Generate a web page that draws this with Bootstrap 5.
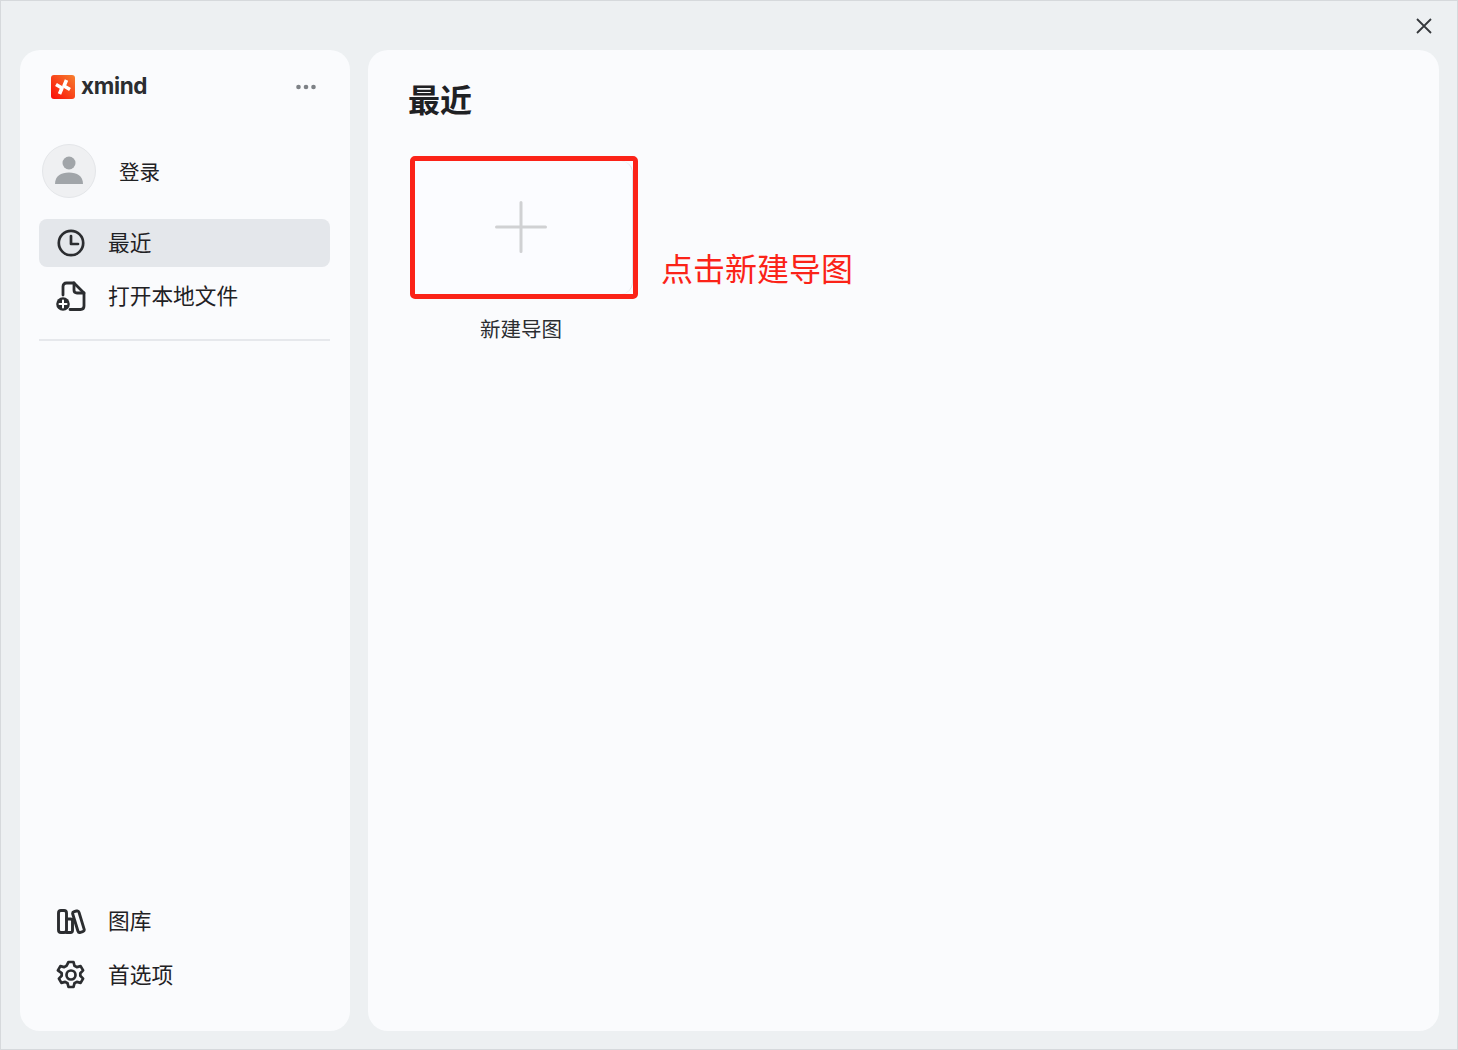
<!DOCTYPE html>
<html lang="zh">
<head>
<meta charset="utf-8">
<title>Xmind</title>
<link rel="stylesheet" href="https://cdn.jsdelivr.net/npm/bootstrap@5.3.0/dist/css/bootstrap.min.css">
<style>
html,body{height:100%;}
body{background:#edf0f2;font-family:"Noto Sans CJK SC","Liberation Sans",sans-serif;color:#1f2124;overflow:hidden;}
.shell{width:1458px;height:1050px;border:1px solid #d6d9dc;padding:0 18px 18px 19px;}
.topbar{height:49px;}
.close-x{width:32px;height:32px;background:none;border:0;padding:0;margin-top:9px;margin-right:-1px;}
.panes{height:981px;gap:18px;}
.side{width:330px;background:#fafbfd;border-radius:20px;padding:0 20px 32px 19px;}
.primary{width:1071px;background:#fafbfd;border-radius:20px;padding:25px 40px;position:relative;}
.brand{height:74px;padding:0 14px 0 12px;}
.brand-name{font-family:Inter,"Liberation Sans",sans-serif;font-weight:700;font-size:22.500px;letter-spacing:-.35px;color:#2b2d30;margin-left:6px;margin-top:-1px;line-height:1;}
.dots{margin-left:auto;}
.user-row{height:54px;margin-top:20px;padding-left:3px;margin-bottom:21px;}
.avatar{width:54px;height:54px;border-radius:50%;background:#eff0f2;border:1px solid #e4e6e9;}
.user-name{font-size:20.500px;margin-left:23px;color:#1f2124;}
.menu-row{height:48px;border-radius:8px;padding-left:17px;margin-bottom:5px;font-size:21.700px;color:#1f2124;}
.menu-row.on{background:#e4e7eb;}
.menu-row svg{margin-right:22px;flex:none;}
.menu-row span{margin-top:-1px;}
.divider{height:2px;background:#e6e8ec;margin-top:14px;}
.low-row{margin-bottom:6px;}
.heading{font-size:32px;font-weight:700;line-height:46px;margin:0;color:#1f2124;}
.tile-wrap{width:228px;margin-top:35px;margin-left:2px;}
.tile{height:143px;border:5px solid #fb2318;border-radius:5px;background:#fbfcff;}
.tile-inner{width:100%;height:100%;border-radius:12px;border-right:1px solid #e2e4e8;padding-right:5px;padding-bottom:2px;}
.tile-label{font-size:20.500px;text-align:center;margin-top:15px;margin-right:6px;color:#2b2d30;line-height:28px;}
.note{position:absolute;left:293px;top:194px;font-size:32px;line-height:46px;color:#fb2318;}
</style>
</head>
<body>
<div class="shell">
  <div class="topbar d-flex justify-content-end">
    <button class="close-x d-flex align-items-center justify-content-center" aria-label="关闭">
      <svg width="18" height="18" viewBox="0 0 18 18"><path d="M2 2 16 16M16 2 2 16" stroke="#35383c" stroke-width="1.800" fill="none"/></svg>
    </button>
  </div>
  <div class="panes d-flex">
    <aside class="side d-flex flex-column">
      <div class="brand d-flex align-items-center">
        <svg width="24" height="24" viewBox="0 0 24 24"><defs><linearGradient id="lg" x1="1" y1="0" x2="0" y2="1"><stop offset="0" stop-color="#f6802f"/><stop offset="1" stop-color="#fb0a06"/></linearGradient></defs><rect width="24" height="24" rx="3" fill="url(#lg)"/><g fill="none" stroke="#fff" stroke-width="3.600" stroke-linejoin="round"><path d="M5 9.500 11 13 8.500 19"/><path d="M19 14.500 13 11 15.500 5"/></g></svg>
        <span class="brand-name">xmind</span>
        <svg class="dots" width="20" height="6" viewBox="0 0 20 6"><circle cx="2.500" cy="3" r="2.300" fill="#7d8186"/><circle cx="10" cy="3" r="2.300" fill="#7d8186"/><circle cx="17.500" cy="3" r="2.300" fill="#7d8186"/></svg>
      </div>
      <div class="user-row d-flex align-items-center">
        <div class="avatar d-flex align-items-center justify-content-center">
          <svg width="30" height="30" viewBox="0 0 30 30"><circle cx="15" cy="7" r="6.500" fill="#a1a5a9"/><path d="M1 28c0-8 6-11.500 14-11.500S29 20 29 28z" fill="#a1a5a9"/></svg>
        </div>
        <span class="user-name">登录</span>
      </div>
      <div class="menu-row on d-flex align-items-center">
        <svg width="30" height="30" viewBox="0 0 30 30" fill="none" stroke="#2b2d30" stroke-width="2.700" stroke-linecap="round" stroke-linejoin="round"><circle cx="15" cy="15" r="12.200"/><path d="M15 8v8h7"/></svg>
        <span>最近</span>
      </div>
      <div class="menu-row d-flex align-items-center">
        <svg width="30" height="30" viewBox="0 0 30 30" fill="none" stroke="#2b2d30" stroke-width="2.800" stroke-linecap="round" stroke-linejoin="round"><path d="M7 14V5.500Q7 2 10.500 2H18l10 10v13q0 3.500-3.500 3.500H14"/><path d="M18 2v7q0 3 3 3h7"/><circle cx="7" cy="23" r="6.800" fill="#2b2d30" stroke="none"/><path d="M3.500 23h7M7 19.500v7" stroke="#fff" stroke-width="2"/></svg>
        <span>打开本地文件</span>
      </div>
      <div class="divider"></div>
      <div class="mt-auto">
        <div class="menu-row low-row d-flex align-items-center">
          <svg width="30" height="30" viewBox="0 0 30 30" fill="none" stroke="#2b2d30" stroke-width="2.900" stroke-linecap="round" stroke-linejoin="round"><rect x="2.500" y="4.500" width="8" height="22" rx="2.500"/><path d="M10.500 13h4q2 0 2 2v9.500q0 2-2 2h-4"/><rect x="19" y="5" width="6.500" height="21.500" rx="2" transform="rotate(-17 22 15)"/></svg>
          <span>图库</span>
        </div>
        <div class="menu-row d-flex align-items-center mb-0">
          <svg width="30" height="30" viewBox="0 0 30 30" fill="none" stroke="#2b2d30" stroke-width="2.700" stroke-linecap="round" stroke-linejoin="round"><circle cx="15" cy="15" r="4.500"/><path d="M12.500 2h5l1 3.800 2.300 1.300 3.800-1 2.500 4.300-2.800 2.800v2.600l2.800 2.800-2.500 4.300-3.800-1-2.300 1.300-1 3.800h-5l-1-3.800-2.300-1.300-3.800 1-2.500-4.300 2.800-2.800v-2.600L1.900 10.400l2.500-4.300 3.800 1 2.300-1.300z"/></svg>
          <span>首选项</span>
        </div>
      </div>
    </aside>
    <main class="primary">
      <h1 class="heading">最近</h1>
      <div class="tile-wrap">
        <div class="tile">
          <div class="tile-inner d-flex align-items-center justify-content-center">
            <svg width="52" height="52" viewBox="0 0 52 52"><path d="M26 1.500v49M1.500 26h49" stroke="#d0d1d3" stroke-width="3" stroke-linecap="round"/></svg>
          </div>
        </div>
        <div class="tile-label">新建导图</div>
      </div>
      <div class="note">点击新建导图</div>
    </main>
  </div>
</div>
</body>
</html>
